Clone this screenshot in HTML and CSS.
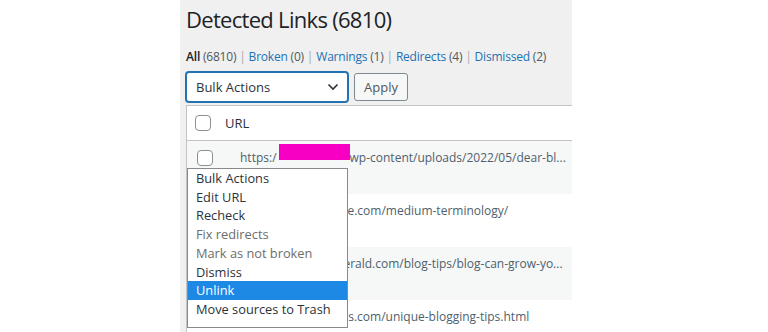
FILE: index.html
```html
<!DOCTYPE html>
<html>
<head>
<meta charset="utf-8">
<link rel="stylesheet" href="styles.css">
</head>
<body>
<div class="page">
  <div class="side"></div>
  <div class="panel">
    <h1 class="title">Detected Links (6810)</h1>
    <ul class="filters">
      <li><b class="cur">All</b> <span class="count">(6810)</span> |</li>
      <li><a>Broken</a> <span class="count">(0)</span> |</li>
      <li><a>Warnings</a> <span class="count">(1)</span> |</li>
      <li><a>Redirects</a> <span class="count">(4)</span> |</li>
      <li><a>Dismissed</a> <span class="count">(2)</span></li>
    </ul>
    <div class="actions">
      <div class="select">
        <span>Bulk Actions</span>
        <svg class="chev" width="12" height="8" viewBox="0 0 12 8"><path d="M1.5 1.5 L6 6 L10.5 1.5" fill="none" stroke="#2c3338" stroke-width="1.6"/></svg>
      </div>
      <div class="btn">Apply</div>
    </div>
    <div class="table">
      <div class="thead">
        <span class="cb"></span>
        <span class="th">URL</span>
      </div>
      <div class="row alt">
        <span class="cb"></span>
        <span class="url">https:/<span class="redact"></span>wp-content/uploads/2022/05/dear-bl...</span>
      </div>
      <div class="row">
        <span class="cb"></span>
        <span class="url">https://writing-guide.com/medium-terminology/</span>
      </div>
      <div class="row alt">
        <span class="cb"></span>
        <span class="url">https://www.blogherald.com/blog-tips/blog-can-grow-yo...</span>
      </div>
      <div class="row">
        <span class="cb"></span>
        <span class="url">https://basicblogtips.com/unique-blogging-tips.html</span>
      </div>
    </div>
    <ul class="menu">
      <li>Bulk Actions</li>
      <li>Edit URL</li>
      <li>Recheck</li>
      <li class="dis">Fix redirects</li>
      <li class="dis">Mark as not broken</li>
      <li>Dismiss</li>
      <li class="sel">Unlink</li>
      <li>Move sources to Trash</li>
    </ul>
  </div>
  <div class="rest"></div>
</div>
</body>
</html>
```
FILE: styles.css
```css
html, body {
  margin: 0;
  padding: 0;
  background: #ffffff;
  font-family: "Open Sans", "Noto Sans", sans-serif;
  color: #1d2327;
}
.page {
  display: flex;
  height: 332px;
  overflow: hidden;
}
.side {
  width: 180px;
  flex: none;
}
.panel {
  position: relative;
  width: 392px;
  flex: none;
  background: #f0f0f1;
  padding-left: 6px;
  box-sizing: border-box;
  overflow: hidden;
}
.rest {
  flex: 1;
}
.title {
  margin: 0;
  padding-top: 3px;
  font-size: 22px;
  font-weight: 400;
  line-height: 32px;
  letter-spacing: -0.7px;
  color: #1d2327;
}
.filters {
  list-style: none;
  margin: 0;
  padding: 0;
  margin-top: 13px;
  display: flex;
  font-size: 12px;
  line-height: 18px;
  letter-spacing: -0.2px;
  color: #a7aaad;
}
.filters li {
  margin-right: 3px;
  white-space: nowrap;
}
.filters a { color: #2271b1; }
.filters .cur { color: #1d2327; font-weight: 600; }
.filters .count { color: #50575e; }
.actions {
  display: flex;
  gap: 6px;
  margin-top: 6px;
  height: 30px;
}
.select {
  width: 162px;
  height: 30px;
  box-sizing: border-box;
  border: 1px solid #2271b1;
  box-shadow: 0 0 0 1px #2271b1;
  border-radius: 3px;
  background: #fff;
  display: flex;
  align-items: center;
  justify-content: space-between;
  padding: 0 8px 0 9px;
  font-size: 13px;
  color: #2c3338;
}
.btn {
  margin-top: 1px;
  height: 28px;
  box-sizing: border-box;
  border: 1px solid #7e8993;
  border-radius: 3px;
  background: #f6f7f7;
  color: #50575e;
  font-size: 13px;
  line-height: 26px;
  padding: 0 9px;
}
.table {
  margin-top: 3px;
  background: #fff;
  border: 1px solid #c3c4c7;
  border-right: none;
  width: 400px;
}
.thead {
  height: 34px;
  display: flex;
  align-items: center;
  border-bottom: 1px solid #c3c4c7;
  padding-left: 8px;
}
.th {
  margin-left: 14px;
  font-size: 13px;
  color: #2c3338;
}
.cb {
  width: 14px;
  height: 14px;
  border: 1px solid #8c8f94;
  border-radius: 4px;
  background: #fff;
  flex: none;
}
.row {
  height: 53px;
  display: flex;
  align-items: flex-start;
  padding-left: 10px;
  padding-top: 9px;
  box-sizing: border-box;
}
.row.alt { background: #f6f7f7; }
.url {
  margin-left: 27px;
  font-size: 12px;
  line-height: 16px;
  color: #4e5f6d;
  white-space: nowrap;
}
.redact {
  display: inline-block;
  position: relative;
  top: -6px;
  width: 71px;
  height: 16px;
  margin-left: 2px;
  background: #f800c4;
  vertical-align: top;
}
.menu {
  position: absolute;
  left: 7px;
  top: 168px;
  width: 161px;
  height: 160px;
  box-sizing: border-box;
  margin: 0;
  padding: 0;
  list-style: none;
  background: #fff;
  border: 1px solid #8a8a8a;
  font-size: 12.8px;
  line-height: 18.7px;
  color: #2c3338;
}
.menu li {
  padding-left: 8px;
}
.menu li.dis { color: #6d6d6d; }
.menu li.sel { background: #1e88e5; color: #fff; }
```
